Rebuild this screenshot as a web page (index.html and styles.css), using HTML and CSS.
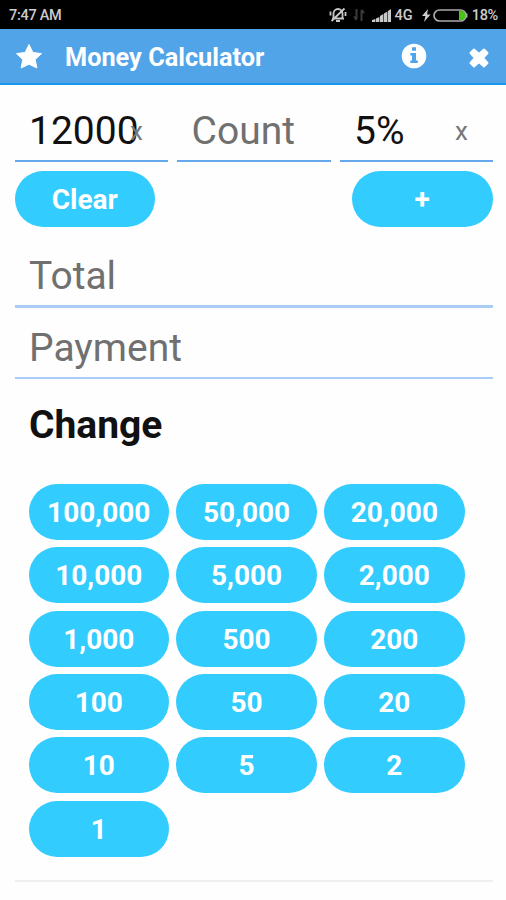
FILE: index.html
```html
<!DOCTYPE html>
<html lang="en">
<head>
<meta charset="utf-8">
<title>Money Calculator</title>
<link rel="stylesheet" href="styles.css">
</head>
<body>
<div class="status">
  <span class="time">7:47 AM</span>
  <div class="indicators">
    <svg class="mute" width="18" height="16" viewBox="0 0 18 16" fill="none" stroke="#c8c8c8" stroke-width="1.8"><path d="M4.500 11.500V6.500a4.500 4.500 0 0 1 9 0v5zM3 11.700h12M7 14h4M15.500 1.500L2.500 14M1.500 4.500v4M16.500 5v4"/></svg>
    <svg class="data" width="12" height="14" viewBox="0 0 12 14" fill="none" stroke="#3a3a3a" stroke-width="2"><path d="M3.500 1v10M1 8.500L3.500 12M8.500 13V2M11 5L8.500 2"/></svg>
    <svg class="signal" width="19" height="13" viewBox="0 0 19 13" fill="#c8c8c8"><path d="M0 13v-2l3.400-1v3zM4 13V9.500L7.400 8v5zM8 13V7l3.400-2v8zM12 13V4.500l3.400-2V13zM16 13V2l3-2v13z"/></svg>
    <span class="network">4G</span>
    <svg class="bolt" width="9" height="13" viewBox="0 0 9 13" fill="#d0d0d0"><path d="M6 0L0 7h3.500L2 13l6.500-7.500H5z"/></svg>
    <svg class="battery" width="35" height="13" viewBox="0 0 35 13"><rect x="1" y="1" width="32" height="11" rx="5.500" fill="#000" stroke="#aaa" stroke-width="1.700"/><path d="M26 2h2a4.500 4.500 0 0 1 0 9h-2z" fill="#48c414"/><path d="M33.500 4.500v4" stroke="#aaa" stroke-width="2"/></svg>
    <span class="percent">18%</span>
  </div>
</div>
<header class="bar">
  <svg class="star" width="28" height="27" viewBox="0 0 28 27" fill="#fff"><path d="M14 1.500l3.900 8 8.600 1.100-6.300 6 1.700 8.400L14 21.200 6.100 25l1.700-8.400-6.300-6 8.600-1.100z" stroke="#fff" stroke-linejoin="round"/></svg>
  <h1 class="title">Money Calculator</h1>
  <svg class="info" width="26" height="26" viewBox="0 0 26 26"><circle cx="13" cy="13" r="12.300" fill="#fff"/><path d="M11 4.300h4v3.400h-4zM9.300 10H15v7.500h1.800V20H9.300v-2.500H11v-5H9.300z" fill="#52a4e9"/></svg>
  <svg class="close" width="20" height="20" viewBox="0 0 20 20" fill="#fff" stroke="#fff" stroke-width="2" stroke-linejoin="round"><path d="M5 1.500L10 6l5-4.500L18.500 5 14 10l4.500 5-3.500 3.500-5-4.500-5 4.500L1.500 15 6 10 1.500 5z"/></svg>
</header>
<main class="content">
  <div class="entry">
    <div class="field">12000<span class="erase">x</span></div>
    <div class="field hint">Count</div>
    <div class="field">5%<span class="erase">x</span></div>
  </div>
  <div class="actions">
    <button class="pill">Clear</button>
    <button class="pill">+</button>
  </div>
  <div class="field wide total hint">Total</div>
  <div class="field wide payment hint">Payment</div>
  <h2 class="change">Change</h2>
  <div class="keys">
    <button class="pill">100,000</button><button class="pill">50,000</button><button class="pill">20,000</button>
    <button class="pill">10,000</button><button class="pill">5,000</button><button class="pill">2,000</button>
    <button class="pill">1,000</button><button class="pill">500</button><button class="pill">200</button>
    <button class="pill">100</button><button class="pill">50</button><button class="pill">20</button>
    <button class="pill">10</button><button class="pill">5</button><button class="pill">2</button>
    <button class="pill">1</button>
  </div>
  <hr class="rule">
</main>
</body>
</html>
```
FILE: styles.css
```css
* { box-sizing: border-box; }
body {
  margin: 0;
  height: 900px;
  overflow: hidden;
  background: #fefefe;
  color: #111;
  font-family: Roboto, "Liberation Sans", sans-serif;
}
svg { display: block; flex: none; }
.status {
  display: flex;
  align-items: center;
  justify-content: space-between;
  height: 29px;
  padding: 0 8px 0 9px;
  background: #000;
  color: #ccc;
  font-size: 14.5px;
  font-weight: 500;
}
.time { margin-top: 1px; letter-spacing: -0.3px; }
.indicators { display: flex; align-items: center; margin-top: 1px; }
.data { margin-left: 6px; }
.signal { margin-left: 7px; }
.network { margin-left: 4px; }
.bolt { margin-left: 9px; }
.battery { margin-left: 2px; }
.percent { margin-left: 4px; letter-spacing: -0.3px; }
.bar {
  display: flex;
  align-items: center;
  height: 56px;
  padding: 0 17px 0 15px;
  background: #52a4e9;
  border-bottom: 2px solid #1c96ec;
  color: #fff;
}
.title { margin: 3px auto 0 22px; font-size: 25.3px; line-height: 32px; font-weight: 700; }
.info { margin-right: 42px; }
.close { margin-top: 3px; }
.content { padding: 15px 13.5px 0 14.5px; }
.entry { display: grid; grid-template-columns: repeat(3, 153.500px); gap: 9px; }
.field {
  position: relative;
  height: 62px;
  padding-left: 14.5px;
  border-bottom: 2px solid #66a8ec;
  font-size: 39px;
  line-height: 63px;
  white-space: nowrap;
}
.hint { color: #707070; }
.erase { position: absolute; right: 25px; top: 0; color: #777; font-size: 26px; }
.actions { display: flex; justify-content: space-between; margin-top: 9px; }
.pill {
  width: 140.500px;
  height: 56px;
  padding: 1px 0 0;
  border: 0;
  border-radius: 28px;
  background: #32ccff;
  color: #fff;
  font: 700 28px/55px Roboto, "Liberation Sans", sans-serif;
}
.wide { border-color: #a9cdf5; line-height: 65px; }
.total { height: 64px; margin-top: 17px; border-bottom-width: 3px; }
.payment { height: 64px; margin-top: 7px; line-height: 66px; }
.change { margin: 23px 0 0 14.5px; font-size: 39px; line-height: 46px; font-weight: 700; }
.keys {
  display: grid;
  grid-template-columns: repeat(3, 140.500px);
  column-gap: 7.3px;
  row-gap: 7.3px;
  margin: 36.2px 0 0 14px;
}
.rule { margin: 23px 0 0; border: 0; border-top: 2px solid #efefef; }
```
